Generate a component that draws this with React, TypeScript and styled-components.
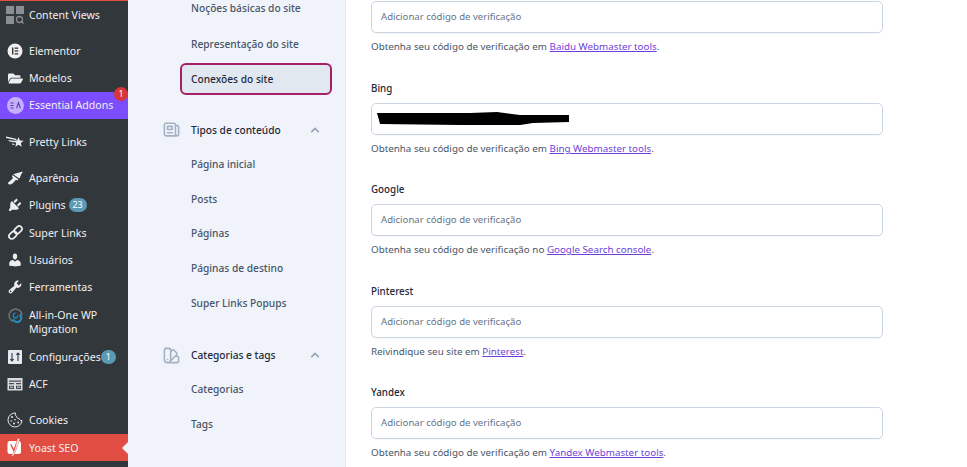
import React from "react";
import styled, { createGlobalStyle } from "styled-components";
import { FaFolderOpen } from "react-icons/fa";
import { HiOutlineNewspaper, HiOutlineColorSwatch, HiChevronUp } from "react-icons/hi";

const Global = createGlobalStyle`
  html, body { margin: 0; padding: 0; height: 100%; overflow: hidden; background: #fff; }
  #root { height: 467px; }
  * { box-sizing: border-box; }
`;

const Page = styled.div`
  display: flex;
  width: 967px;
  height: 467px;
  overflow: hidden;
  font-family: "Noto Sans", "Open Sans", sans-serif;
`;

const Sidebar = styled.nav`
  width: 128px;
  flex: none;
  background: #32373c;
  border-top: 1px solid #e14d43;
  display: flex;
  flex-direction: column;
`;

const MenuRow = styled.div<{ $gap?: number; $bg?: string; $tall?: boolean }>`
  height: ${(p) => (p.$tall ? 40 : 27.4)}px;
  margin-top: ${(p) => p.$gap ?? 0}px;
  flex: none;
  display: flex;
  align-items: ${(p) => (p.$tall ? "flex-start" : "center")};
  position: relative;
  padding: ${(p) => (p.$tall ? 6 : 0)}px 0 0 7px;
  background: ${(p) => p.$bg ?? "transparent"};
  color: #f0f0f1;
  font-size: 10.6px;
  line-height: 14px;
`;

const IconSlot = styled.span`
  width: 16px;
  height: 16px;
  flex: none;
  margin-right: 6px;
  display: flex;
  align-items: center;
  justify-content: center;
  color: #eceef0;
  svg { flex: none; }
`;

const Count = styled.span<{ $wide?: boolean }>`
  display: inline-flex;
  align-items: center;
  justify-content: center;
  min-width: ${(p) => (p.$wide ? 18 : 15)}px;
  height: 14px;
  border-radius: 8px;
  margin-left: ${(p) => (p.$wide ? 3 : 0)}px;
  background: #5a9ab5;
  color: #fff;
  font-size: 9px;
`;

const Alert = styled.span`
  position: absolute;
  right: 0;
  top: -5px;
  width: 14px;
  height: 14px;
  border-radius: 50%;
  background: #d63638;
  color: #fff;
  font-size: 9px;
  display: flex;
  align-items: center;
  justify-content: center;
`;

const Notch = styled.span`
  position: absolute;
  right: 0;
  top: 8px;
  border: 6px solid transparent;
  border-left-width: 0;
  border-right-color: #f0f3f8;
`;

const SubNav = styled.aside`
  width: 218px;
  flex: none;
  background: #f0f3f9;
  border-right: 1px solid #e6eaf1;
  padding: 0 13px 0 35px;
  display: flex;
  flex-direction: column;
`;

const SubItem = styled.div<{ $active?: boolean; $gap?: number }>`
  height: ${(p) => (p.$active ? 32 : 34.7)}px;
  margin: ${(p) => p.$gap ?? 0}px 0 0 17px;
  flex: none;
  display: flex;
  align-items: center;
  padding-left: ${(p) => (p.$active ? 9 : 11)}px;
  font-size: 10.2px;
  color: ${(p) => (p.$active ? "#1e293b" : "#475569")};
  font-weight: 500;
  background: ${(p) => (p.$active ? "#e2e8f0" : "transparent")};
  border: ${(p) => (p.$active ? "2px solid #a61e69" : "none")};
  border-radius: 6px;
`;

const Heading = styled.div<{ $gap: number }>`
  display: flex;
  align-items: center;
  margin-top: ${(p) => p.$gap}px;
  height: 18px;
  flex: none;
  font-size: 10.2px;
  font-weight: 500;
  color: #1e293b;
  svg { flex: none; }
`;

const HeadingIcon = styled.span`
  width: 17px;
  height: 19px;
  margin: 0 11px 0 0;
  color: #a3b1c4;
  display: flex;
  align-items: center;
  justify-content: center;
`;

const HeadingLabel = styled.span`
  flex: 1;
`;

const Chevron = styled.span`
  color: #94a3b8;
  display: flex;
  margin-right: 9px;
`;

const Main = styled.main`
  flex: 1;
  padding: 1px 0 0 25px;
  background: #fff;
`;

const Column = styled.div`
  width: 512px;
  display: flex;
  flex-direction: column;
`;

const Field = styled.div<{ $gap?: number }>`
  margin-top: ${(p) => p.$gap ?? 0}px;
`;

const Label = styled.div`
  font-size: 9.8px;
  line-height: 14px;
  font-weight: 500;
  color: #1e293b;
  margin-bottom: 7px;
`;

const InputBox = styled.div`
  position: relative;
  height: 32px;
  border: 1px solid #cbd5e1;
  border-radius: 5px;
  background: #fff;
  display: flex;
  align-items: center;
  padding: 0 0 1px 9px;
  font-size: 9.6px;
  color: #64748b;
  box-shadow: 0 1px 1px rgba(0, 0, 0, 0.03);
`;

const Help = styled.p`
  margin: 7px 0 0;
  font-size: 9.8px;
  line-height: 14px;
  color: #475569;
`;

const HelpLink = styled.a`
  color: #6d3fd8;
  text-decoration: underline;
`;

const Scribble = styled.svg`
  position: absolute;
  left: 5px;
  top: 7px;
`;

const svgProps = { width: 16, height: 16, viewBox: "0 0 16 16", fill: "currentColor" };
const Dash = ({ d }: { d: string }) => (
  <svg width="16" height="16" viewBox="0 0 20 20" fill="currentColor">
    <path d={d} />
  </svg>
);

const plugins = "M13.11 4.36L9.87 7.6 8 5.73l3.24-3.24c.35-.34 1.05-.2 1.56.32.52.51.66 1.21.31 1.55zm-8 1.77l.91-1.12 9.01 9.01-1.19.84c-.71.71-2.63 1.16-3.82 1.16H6.14L4.9 17.26c-.59.59-1.54.59-2.12 0-.59-.58-.59-1.53 0-2.12l1.24-1.24v-3.88c0-1.13.4-3.19 1.09-3.89zm7.26 3.97l3.24-3.24c.34-.35 1.04-.21 1.55.31.52.51.66 1.21.31 1.55l-3.24 3.25z";
const users = "M10 9.25c-2.27 0-2.73-3.44-2.73-3.44C7 4.02 7.82 2 9.97 2c2.16 0 2.98 2.02 2.71 3.81 0 0-.41 3.44-2.68 3.44zm0 2.57L12.72 10c2.39 0 4.52 2.33 4.52 4.53v2.49s-3.65 1.13-7.24 1.13c-3.65 0-7.24-1.13-7.24-1.13v-2.49c0-2.25 1.94-4.48 4.47-4.48z";
const tools = "M16.68 9.77c-1.34 1.34-3.3 1.67-4.95.99l-5.41 6.52c-.99.99-2.59.99-3.58 0s-.99-2.59 0-3.57l6.52-5.42c-.68-1.65-.35-3.61.99-4.95 1.28-1.28 3.12-1.62 4.72-1.06l-2.89 2.89 2.82 2.82 2.86-2.87c.53 1.58.18 3.39-1.08 4.65zM3.81 16.21c.4.39 1.04.39 1.43 0 .4-.4.4-1.04 0-1.43-.39-.4-1.03-.4-1.43 0-.39.39-.39 1.03 0 1.43z";

const ContentViewsIcon = () => (
  <svg width="18" height="18" viewBox="0 0 18 18" fill="#8b8f94">
    <rect x="0" y="0" width="8" height="8" />
    <rect x="10" y="0" width="8" height="8" />
    <rect x="0" y="10" width="8" height="8" />
    <circle cx="13.5" cy="13.5" r="3" fill="none" stroke="#8b8f94" strokeWidth="1.3" />
    <path d="M15.5 15.5l2 2" stroke="#8b8f94" strokeWidth="1.3" />
  </svg>
);
const ElementorIcon = () => (
  <svg {...svgProps}>
    <circle cx="8" cy="8" r="7.5" fill="#f0f0f1" />
    <rect x="5" y="4.5" width="1.4" height="7" fill="#32373c" />
    <rect x="7.6" y="4.5" width="3.6" height="1.3" fill="#32373c" />
    <rect x="7.6" y="7.3" width="3.6" height="1.3" fill="#32373c" />
    <rect x="7.6" y="10.2" width="3.6" height="1.3" fill="#32373c" />
  </svg>
);
const EaIcon = () => (
  <svg width="17" height="17" viewBox="0 0 16 16">
    <circle cx="8" cy="8" r="8" fill="#c5b0fb" />
    <path d="M3.2 5.6h3M3.2 8h3M3.2 10.4h3M9 10.6l1.8-5.2 1.8 5.2" stroke="#5b3bb5" strokeWidth="1" fill="none" />
  </svg>
);
const PrettyIcon = () => (
  <svg width="18" height="14" viewBox="0 0 18 14" fill="currentColor">
    <path d="M0 1.5l10 2.2.8 1.5L0 3zM2.5 5l6 1v1.4L3 6.3zM5.5 8.4l3 .5v1.2L6 9.4z" />
    <path d="M12.5 2l1.4 3.4 3.8.3-2.9 2.4.9 3.7-3.2-2-3.2 2 .9-3.7-2.9-2.4 3.8-.3z" />
  </svg>
);
const BrushIcon = () => (
  <svg width="16" height="14" viewBox="0 0 16 14" fill="currentColor">
    <path d="M6.2 3.2L15.6.4c-.3 1.8-1.2 2.3-1.6 3.3-.4 1-.5 2.2-1.8 3.9z" />
    <path d="M5.4 4l6 4.2-1.2 1.2-1.2-.7-2.5 2.9c-1 1.1-2.5 2.1-4 1.8-1.2-.3-1.8-1.2-1.2-2 .8-1 2.6-2 3.7-3.2l.9-1.5-.8-1.3z" />
  </svg>
);
const ChainIcon = () => (
  <svg width="15" height="15" viewBox="0 0 15 15" fill="none" stroke="currentColor" strokeWidth="1.7">
    <g transform="rotate(-45 7.5 7.5)">
      <rect x="-0.5" y="4.7" width="8.6" height="5.6" rx="2.8" />
      <rect x="6.9" y="4.7" width="8.6" height="5.6" rx="2.8" />
    </g>
  </svg>
);
const SettingsIcon = () => (
  <svg {...svgProps}>
    <rect x="1" y="1" width="14" height="14" rx="1" fill="#e3eaf2" />
    <path d="M5 4v8M3.4 10.2L5 12l1.6-1.8M11 12V4M9.4 5.8L11 4l1.6 1.8" stroke="#32373c" strokeWidth="1.1" fill="none" />
  </svg>
);
const AcfIcon = () => (
  <svg {...svgProps}>
    <rect x="0.5" y="2" width="15" height="12.5" fill="#d9dbde" />
    <path d="M2 4.4h12v1.3H2zM2 7h5v1.2H2zM9 7h5v1.2H9zM2 9.8h5V13H2zM9 9.8h5V13H9z" fill="#4a4f55" />
    <path d="M3 11.2h3M10 11.2h3" stroke="#d9dbde" />
  </svg>
);
const CookieIcon = () => (
  <svg width="16" height="16" viewBox="0 0 16 16" fill="none" stroke="#e4e6e8" strokeWidth="1">
    <path d="M8.5 1A7 7 0 1 0 15 8.5c-1.6.2-2.6-.6-2.9-1.9-1.4.1-2.5-.8-2.5-2.2C8.6 4 8 2.6 8.5 1z" />
    <g fill="#e4e6e8" stroke="none">
      <circle cx="5" cy="5" r="1" />
      <circle cx="8" cy="7.7" r="0.8" />
      <circle cx="4.2" cy="9" r="0.8" />
      <circle cx="7" cy="11.5" r="1" />
      <circle cx="11.2" cy="10.5" r="0.9" />
    </g>
  </svg>
);
const YoastIcon = () => (
  <svg width="16" height="19" viewBox="0 0 16 19" fill="none">
    <rect x="0.5" y="3" width="13.5" height="13" rx="2.5" fill="#fff" />
    <path d="M3.8 6.5L6.8 12.6 10 4.5" stroke="#e14d43" strokeWidth="1.4" />
    <path d="M10.6 0.5h2.3L7.6 15.7c-.6 1.5-1.5 2.3-3 2.6v-1.3c1.1-.3 1.7-.9 2.1-2z" fill="#fff" stroke="#e14d43" strokeWidth="0.5" />
  </svg>
);
const MigrationIcon = () => (
  <svg width="15" height="15" viewBox="0 0 15 15" fill="none">
    <circle cx="7.5" cy="7.5" r="6.4" stroke="#6c7279" strokeWidth="1.5" strokeDasharray="27 13" transform="rotate(110 7.5 7.5)" />
    <path d="M11.5 6.6A4.1 4.1 0 1 1 5.2 11" stroke="#1f8fc4" strokeWidth="2" />
    <path d="M7.5 5.2a2.3 2.3 0 1 0 2.3 2.3" stroke="#1f8fc4" strokeWidth="1.2" />
  </svg>
);

type Row = { label: React.ReactNode; icon: React.ReactNode; gap?: number; bg?: string; tall?: boolean; extra?: React.ReactNode };

const rows: Row[] = [
  { label: "Content Views", icon: <ContentViewsIcon /> },
  { label: "Elementor", icon: <ElementorIcon />, gap: 8.6 },
  { label: "Modelos", icon: <FaFolderOpen size={15} /> },
  { label: "Essential Addons", icon: <EaIcon />, bg: "#7c4dff", extra: <Alert>1</Alert> },
  { label: "Pretty Links", icon: <PrettyIcon />, gap: 9.2 },
  { label: "Aparência", icon: <BrushIcon />, gap: 8.6 },
  { label: "Plugins", icon: <Dash d={plugins} />, extra: <Count $wide>23</Count> },
  { label: "Super Links", icon: <ChainIcon /> },
  { label: "Usuários", icon: <Dash d={users} /> },
  { label: "Ferramentas", icon: <Dash d={tools} />, gap: -0.4 },
  { label: <>All-in-One WP<br />Migration</>, icon: <MigrationIcon />, tall: true, gap: 1 },
  { label: "Configurações", icon: <SettingsIcon />, extra: <Count>1</Count>, gap: 1.2 },
  { label: "ACF", icon: <AcfIcon /> },
  { label: "Cookies", icon: <CookieIcon />, gap: 8.6 },
  { label: "Yoast SEO", icon: <YoastIcon />, bg: "#e14d43", extra: <Notch /> },
];

const fields = [
  { help: "Obtenha seu código de verificação em ", link: "Baidu Webmaster tools" },
  { label: "Bing", help: "Obtenha seu código de verificação em ", link: "Bing Webmaster tools", filled: true },
  { label: "Google", help: "Obtenha seu código de verificação no ", link: "Google Search console" },
  { label: "Pinterest", help: "Reivindique seu site em ", link: "Pinterest" },
  { label: "Yandex", help: "Obtenha seu código de verificação em ", link: "Yandex Webmaster tools" },
];

export default function App() {
  return (
    <Page>
      <Global />
      <Sidebar>
        {rows.map((r, i) => (
          <MenuRow key={i} $gap={r.gap} $bg={r.bg} $tall={r.tall}>
            <IconSlot>{r.icon}</IconSlot>
            <span>{r.label}</span>
            {r.extra}
          </MenuRow>
        ))}
      </Sidebar>
      <SubNav>
        <SubItem $gap={-9.4}>Noções básicas do site</SubItem>
        <SubItem $gap={1.4}>Representação do site</SubItem>
        <SubItem $active $gap={1.6}>Conexões do site</SubItem>
        <Heading $gap={26}>
          <HeadingIcon><HiOutlineNewspaper size={19} /></HeadingIcon>
          <HeadingLabel>Tipos de conteúdo</HeadingLabel>
          <Chevron><HiChevronUp size={16} /></Chevron>
        </Heading>
        {["Página inicial", "Posts", "Páginas", "Páginas de destino", "Super Links Popups"].map((t, i) => (
          <SubItem key={t} $gap={i === 0 ? 7.6 : 0}>{t}</SubItem>
        ))}
        <Heading $gap={26}>
          <HeadingIcon><HiOutlineColorSwatch size={19} /></HeadingIcon>
          <HeadingLabel>Categorias e tags</HeadingLabel>
          <Chevron><HiChevronUp size={16} /></Chevron>
        </Heading>
        {["Categorias", "Tags"].map((t, i) => (
          <SubItem key={t} $gap={i === 0 ? 7.6 : 0}>{t}</SubItem>
        ))}
      </SubNav>
      <Main>
        <Column>
          {fields.map((f, i) => (
            <Field key={i} $gap={i === 0 ? 0 : i === 1 ? 28 : 27.3}>
              {f.label && <Label>{f.label}</Label>}
              <InputBox>
                {f.filled ? (
                  <Scribble width="193" height="15" viewBox="0 0 193 15">
                    <path d="M0 2L93 2 120 1 143 4 192 4 192 11 156 12 143 14 83 14 3 13 2 9z" fill="#000" />
                  </Scribble>
                ) : (
                  "Adicionar código de verificação"
                )}
              </InputBox>
              <Help>
                {f.help}
                <HelpLink>{f.link}</HelpLink>.
              </Help>
            </Field>
          ))}
        </Column>
      </Main>
    </Page>
  );
}
